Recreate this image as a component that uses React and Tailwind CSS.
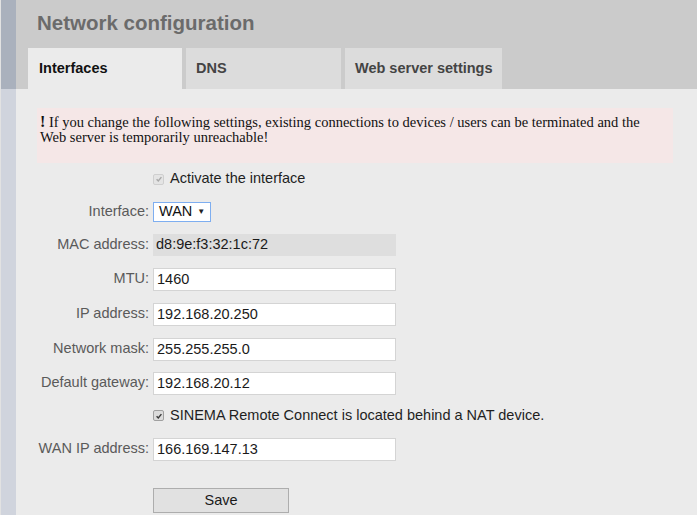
const font = { fontFamily: '"Liberation Sans", Arial, sans-serif' };

function Field({ label, value, className = '' }) {
  return (
    <div className={`flex items-center gap-[4px] ${className}`}>
      <label className="w-[112px] text-right text-[14.5px] text-[#5a5a5a] whitespace-nowrap">{label}</label>
      <input
        readOnly
        value={value}
        className="w-[243px] h-[23px] bg-white border border-[#d4d4d4] px-[3px] text-[14.5px] text-[#1a1a1a] outline-none"
      />
    </div>
  );
}

function Check({ label, className = '', dim = false }) {
  return (
    <div className={`flex items-center h-[20px] pl-[116px] ${className}`}>
      <span className={`flex items-center justify-center w-[11px] h-[11px] rounded-[2px] border ${dim ? 'border-[#cfcfcf] bg-[#e4e4e4]' : 'border-[#a0a0a0] bg-[#dcdcdc]'}`}>
        <svg viewBox="0 0 10 10" className="w-[8px] h-[8px]">
          <path d="M2 5.2 L4.1 7.4 L8 2.6" fill="none" stroke={dim ? '#a8a8a8' : '#3a3a3a'} strokeWidth="1.8" />
        </svg>
      </span>
      <span className="ml-[6px] text-[14.5px] text-[#1f1f1f]">{label}</span>
    </div>
  );
}

export default function App() {
  return (
    <div className="w-[697px] h-[515px] flex bg-[#ebebeb] overflow-hidden" style={font}>
      {/* left strip */}
      <div className="w-[16px] flex flex-col border-l border-[#e2e2e2]">
        <div className="h-[89px] bg-[#aab1bd]" />
        <div className="flex-1 bg-[#d0d4dd]" />
      </div>

      <div className="flex-1 flex flex-col">
        {/* header */}
        <div className="bg-[#cbcbcb] h-[89px] flex flex-col">
          <h1 className="pl-[21px] pt-[10px] h-[48px] text-[20.5px] font-bold text-[#6b6b6b] leading-[26px]">Network configuration</h1>
          <div className="flex items-end pl-[12px] gap-[4px] h-[41px]">
            <div className="w-[154px] h-[41px] bg-[#ebebeb] flex items-center pl-[11px] text-[14.5px] font-bold text-[#111]">Interfaces</div>
            <div className="w-[155px] h-[41px] bg-[#dcdcdc] flex items-center pl-[10px] text-[14.5px] font-bold text-[#444]">DNS</div>
            <div className="w-[157px] h-[41px] bg-[#dcdcdc] flex items-center pl-[10px] text-[14.5px] font-bold text-[#444]">Web server settings</div>
          </div>
        </div>

        {/* content */}
        <div className="flex-1 pl-[21px] pr-[24px]">
          <div className="mt-[19px] h-[55px] bg-[#f5e7e7] pl-[3px] pt-[6px] text-[14.5px] leading-[15px] text-[#111]" style={{ fontFamily: '"Liberation Serif", "Times New Roman", serif' }}>
            <span className="font-bold text-[16px] leading-[15px]">!</span> If you change the following settings, existing connections to devices / users can be terminated and the
            <br />
            Web server is temporarily unreachable!
          </div>

          <Check label="Activate the interface" className="mt-[6px]" dim />

          <div className="flex items-center gap-[4px] mt-[12px]">
            <label className="w-[112px] text-right text-[14.5px] text-[#5a5a5a]">Interface:</label>
            <div className="h-[20px] w-[58px] bg-white border border-[#7eaef0] flex items-center pl-[5px] text-[14.5px] text-[#111]">
              WAN
              <span className="ml-[5px] text-[8px] text-[#222]">▼</span>
            </div>
          </div>

          <div className="flex items-center gap-[4px] mt-[11px]">
            <label className="w-[112px] text-right text-[14.5px] text-[#5a5a5a]">MAC address:</label>
            <div className="w-[243px] h-[22px] bg-[#dedede] flex items-center pl-[3px] text-[14.5px] text-[#1a1a1a]">d8:9e:f3:32:1c:72</div>
          </div>

          <Field label="MTU:" value="1460" className="mt-[12px]" />
          <Field label="IP address:" value="192.168.20.250" className="mt-[12px]" />
          <Field label="Network mask:" value="255.255.255.0" className="mt-[12px]" />
          <Field label="Default gateway:" value="192.168.20.12" className="mt-[11px]" />

          <Check label="SINEMA Remote Connect is located behind a NAT device." className="mt-[11px]" />

          <Field label="WAN IP address:" value="166.169.147.13" className="mt-[12px]" />

          <div className="pl-[116px] mt-[27px]">
            <button className="w-[136px] h-[25px] bg-[#e1e1e1] border border-[#adadad] text-[14.5px] text-[#1a1a1a]">Save</button>
          </div>
        </div>
      </div>
    </div>
  );
}
